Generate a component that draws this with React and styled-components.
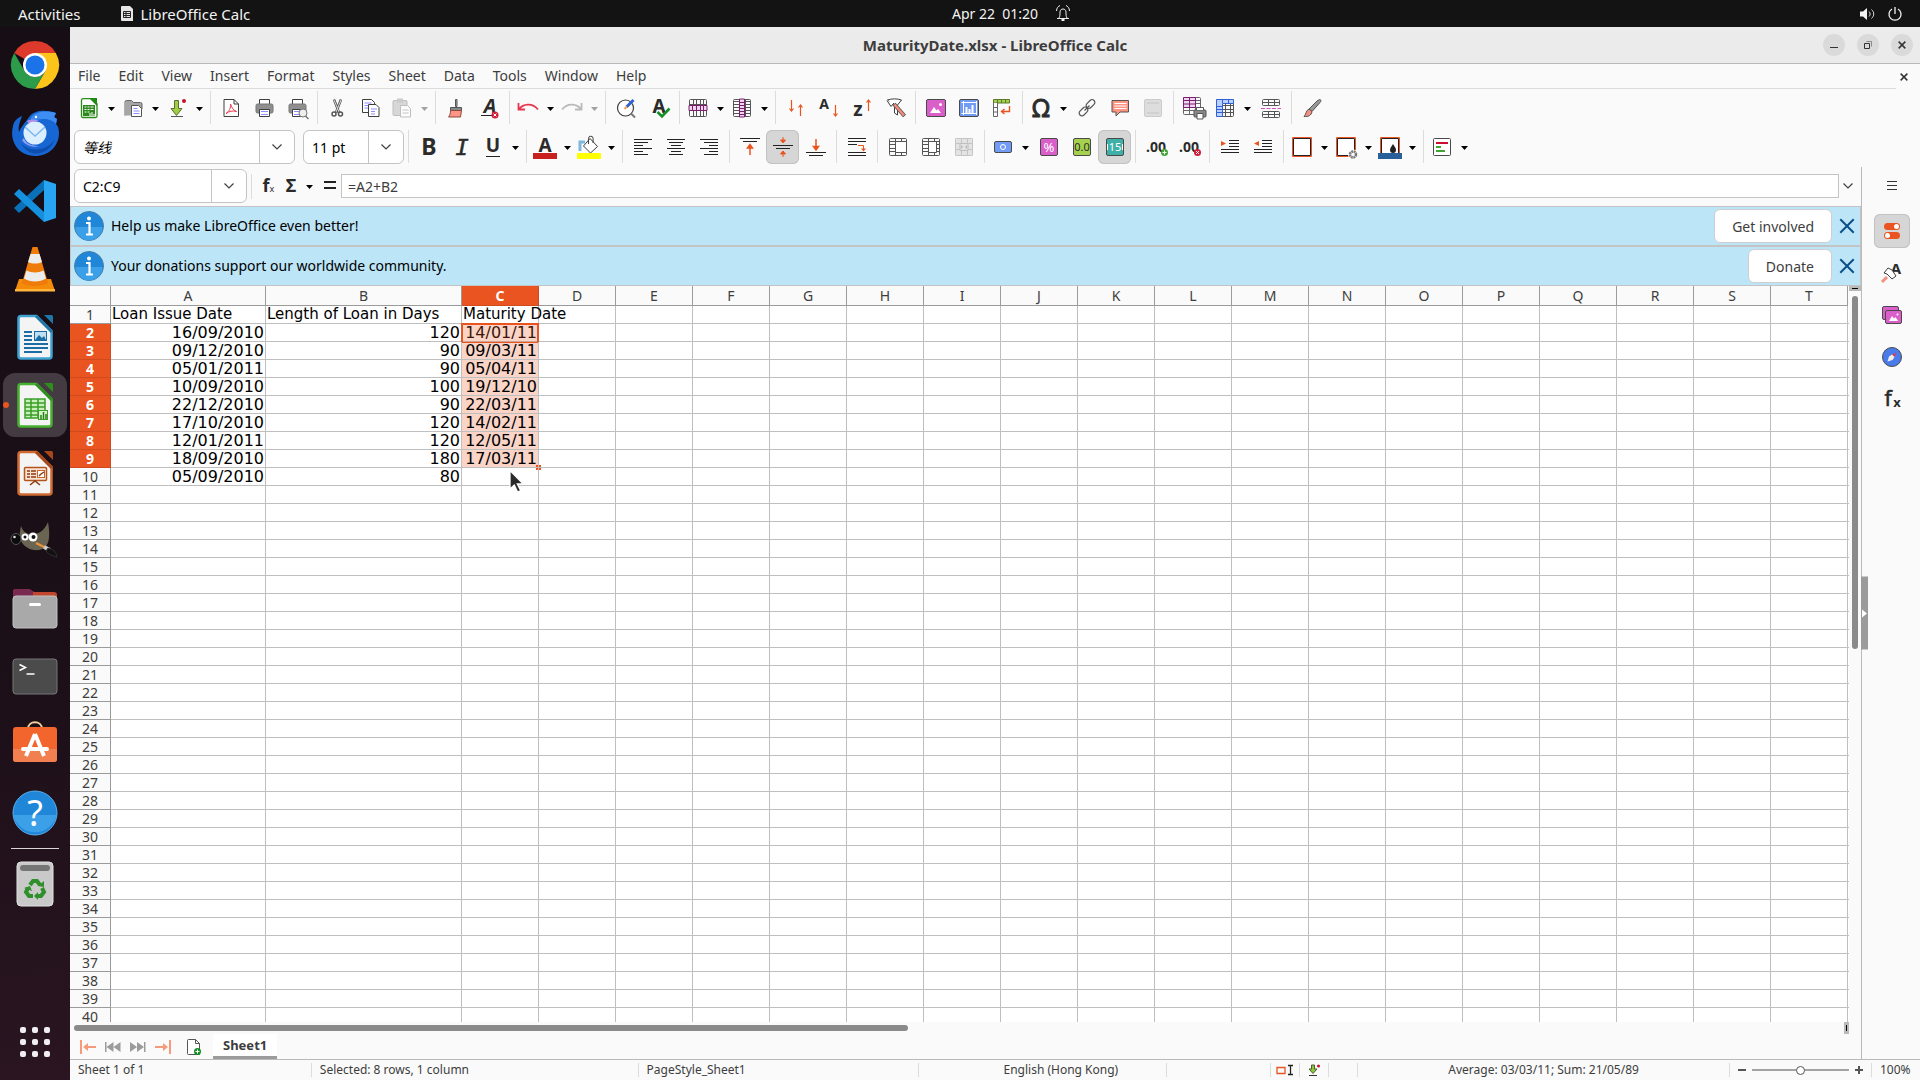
import styled, { createGlobalStyle, css } from "styled-components";

const Global = createGlobalStyle`
    * {
        box-sizing: border-box;
    }
    body {
        margin: 0;
        overflow: hidden;
        font-family: "Noto Sans", "Noto Sans CJK SC", sans-serif;
        font-size: 14px;
        color: #3d3d3d;
    }
    button, input {
        font: inherit;
        color: inherit;
        padding: 0;
        margin: 0;
        border: 0;
        background: none;
    }
    svg {
        display: block;
        flex: none;
        overflow: visible;
    }
`;

const Desktop = styled.div`
    height: 100vh;
    display: flex;
    flex-direction: column;
`;

const TopBar = styled.header`
    height: 27px;
    flex: none;
    display: grid;
    grid-template-columns: 1fr auto 1fr;
    align-items: center;
    background: #131313;
    color: #f2f2f2;
    line-height: 22px;
    padding: 0 18px;
`;

const TopGroup = styled.div`
    display: flex;
    align-items: center;
    gap: ${(p) => p.$gap}px;
    justify-content: ${(p) => (p.$end ? "flex-end" : "flex-start")};
    margin-left: ${(p) => p.$left || 0}px;
    font-size: ${(p) => (p.$large ? 15 : 14)}px;
    white-space: pre;
`;

const AppName = styled.span`
    display: flex;
    align-items: center;
    gap: 7px;
`;

const Below = styled.div`
    flex: 1;
    min-height: 0;
    display: flex;
`;

const Dock = styled.nav`
    width: 70px;
    flex: none;
    padding: 4px 0;
    display: flex;
    flex-direction: column;
    align-items: center;
    background: linear-gradient(175deg, #170d14 0%, #1b0f18 60%, #2a1521 100%);
`;

const DockButton = styled.button`
    position: relative;
    width: 64px;
    height: 64px;
    margin: 2px 0;
    flex: none;
    display: flex;
    align-items: center;
    justify-content: center;
    border-radius: 12px;
    background: ${(p) => (p.$active ? "#443a41" : "transparent")};
    &::before {
        content: "";
        display: ${(p) => (p.$active ? "block" : "none")};
        position: absolute;
        left: 0;
        width: 6px;
        height: 6px;
        border-radius: 50%;
        background: #e95420;
    }
`;

const DockLine = styled.div`
    width: 48px;
    height: 1px;
    margin: 1px 0;
    flex: none;
    background: #d8d4d6;
`;

const DockFill = styled.div`
    flex: 1;
`;

const Win = styled.main`
    flex: 1;
    min-width: 0;
    display: flex;
    flex-direction: column;
    background: #fafafa;
`;

const TitleBar = styled.div`
    height: 37px;
    flex: none;
    display: grid;
    grid-template-columns: 1fr auto 1fr;
    align-items: center;
    padding-right: 7px;
    background: #ebebeb;
    border-bottom: 1px solid #b9b9b9;
`;

const Title = styled.h1`
    grid-column: 2;
    margin: 0;
    padding-left: 7px;
    font-size: 15px;
    line-height: 20px;
    font-weight: 700;
`;

const WinButtons = styled.div`
    display: flex;
    justify-content: flex-end;
    gap: 12px;
`;

const RoundButton = styled.button`
    width: 22px;
    height: 22px;
    border-radius: 50%;
    background: #dadada;
    display: flex;
    align-items: center;
    justify-content: center;
`;

const MenuBar = styled.div`
    height: 25px;
    flex: none;
    display: flex;
    justify-content: space-between;
    padding-right: 8px;
`;

const MenuList = styled.div`
    flex: 1;
    display: flex;
    gap: 2px;
    border-bottom: 1px solid #dcdcdc;
`;

const MenuButton = styled.button`
    padding: 0 8px;
    line-height: 24px;
`;

const MenuClose = styled.button`
    width: 16px;
    display: flex;
    align-items: center;
    justify-content: center;
`;

const Toolbar = styled.div`
    height: 39px;
    flex: none;
    display: flex;
    align-items: flex-start;
    padding: 2px 0 0 4px;
`;

const ToolButton = styled.button`
    width: ${(p) => (p.$split ? 44 : 33)}px;
    height: 34px;
    padding-left: ${(p) => (p.$split ? 3 : 5)}px;
    flex: none;
    display: flex;
    align-items: center;
    border-radius: 6px;
    opacity: ${(p) => (p.disabled ? 0.35 : 1)};
    ${(p) =>
        p.$on &&
        css`
            background: #d6d6d6;
            box-shadow: inset 0 0 0 1px #c2c2c2;
        `}
`;

const Separator = styled.div`
    width: 1px;
    height: ${(p) => p.$height || 33}px;
    margin: 0 3px 0 4px;
    flex: none;
    align-self: ${(p) => (p.$middle ? "center" : "auto")};
    background: #dcdcdc;
`;

const Combo = styled.div`
    height: 34px;
    width: ${(p) => p.$width}px;
    margin-right: ${(p) => p.$after}px;
    flex: none;
    display: flex;
    background: #fff;
    border: 1px solid #c4c4c4;
    border-radius: 6px;
    color: #000;
`;

const ComboInput = styled.input`
    flex: 1;
    min-width: 0;
    padding-left: 8px;
    font-style: ${(p) => (p.$italic ? "italic" : "normal")};
    outline: none;
`;

const ComboButton = styled.button`
    width: 35px;
    display: flex;
    align-items: center;
    justify-content: center;
    border-left: 1px solid #c4c4c4;
`;

const Content = styled.div`
    flex: 1;
    min-height: 0;
    display: flex;
`;

const Sheet = styled.section`
    flex: 1;
    min-width: 0;
    display: flex;
    flex-direction: column;
`;

const FormulaBar = styled.div`
    height: 39px;
    flex: none;
    display: flex;
    align-items: center;
    padding: 0 4px 1px 4px;
`;

const FormulaButton = styled.button`
    width: ${(p) => p.$width}px;
    height: 24px;
    flex: none;
    display: flex;
    align-items: center;
    justify-content: center;
`;

const FormulaInput = styled.input`
    flex: 1;
    height: 24px;
    padding-left: 6px;
    background: #fff;
    border: 1px solid #c4c4c4;
    outline: none;
`;

const InfoBar = styled.div`
    height: 40px;
    flex: none;
    display: flex;
    align-items: center;
    padding: 0 5px 0 3px;
    background: #bce5f7;
    border: 1px solid #c4c4c4;
    color: #000;
`;

const InfoText = styled.span`
    flex: 1;
    padding-left: 7px;
    line-height: 20px;
`;

const InfoButton = styled.button`
    height: 34px;
    padding: 0 17px;
    margin-right: 7px;
    background: #fff;
    border: 1px solid #cfcfcf;
    border-radius: 6px;
    color: #3d3d3d;
`;

const GridRow = styled.div`
    flex: 1;
    min-height: 0;
    display: flex;
`;

const GridPane = styled.div`
    flex: 1;
    min-width: 0;
    overflow: hidden;
    background: #fff;
`;

const Table = styled.table`
    width: 100%;
    table-layout: fixed;
    border-collapse: separate;
    border-spacing: 0;
    th, td {
        height: 18px;
        padding: 0;
        line-height: 17px;
        white-space: nowrap;
    }
    thead th {
        height: 20px;
        line-height: 19px;
    }
`;

const Head = styled.th`
    font-weight: ${(p) => (p.$on ? 700 : 400)};
    color: ${(p) => (p.$on ? "#fff" : "#3d3d3d")};
    background: ${(p) => (p.$on ? "#e95420" : "#fafafa")};
    border-right: 1px solid ${(p) => (p.$on ? "#cf4a1c" : "#9b9b9b")};
    border-bottom: 1px solid ${(p) => (p.$on ? "#cf4a1c" : "#9b9b9b")};
`;

const HeadEnd = styled.td`
    background: #fafafa;
`;

const Cell = styled.td`
    position: relative;
    font-family: "DejaVu Sans", sans-serif;
    font-size: ${(p) => (p.$number ? 16 : 15)}px;
    color: #000;
    text-align: ${(p) => (p.$number ? "right" : "left")};
    border-right: 1px solid #bfbfbf;
    border-bottom: 1px solid #bfbfbf;
    &:last-child {
        border-right: 0;
    }
`;

const CellText = styled.span`
    padding: 0 1px;
`;

// covers the whole range, hung on its first cell
const Selection = styled.div`
    position: absolute;
    top: -1px;
    left: -1px;
    right: -1px;
    height: ${(p) => p.$rows * 18 + 1}px;
    background: rgba(233, 84, 32, 0.25);
    border: 1px solid #e95420;
    &::before {
        content: "";
        position: absolute;
        top: 0;
        left: 0;
        right: 0;
        height: 17px;
        border: 1px solid #e95420;
    }
    &::after {
        content: "";
        position: absolute;
        right: -3px;
        bottom: -3px;
        width: 5px;
        height: 5px;
        background: #e95420;
    }
`;

const Pointer = styled.svg`
    position: absolute;
    top: 1px;
    left: 46px;
    z-index: 2;
`;

const VScroll = styled.div`
    width: 12px;
    flex: none;
    display: flex;
    flex-direction: column;
    align-items: center;
    background: #fafafa;
`;

const VSplit = styled.div`
    width: 12px;
    height: 5px;
    margin-bottom: 5px;
    background: #b9b9b9;
    display: flex;
    align-items: center;
    justify-content: center;
    &::before {
        content: "";
        width: 6px;
        height: 1px;
        background: #000;
    }
`;

const VThumb = styled.div`
    width: 6px;
    height: 48%;
    border-radius: 3px;
    background: #8a8a8a;
`;

const HScroll = styled.div`
    height: 12px;
    flex: none;
    display: flex;
    align-items: center;
    justify-content: space-between;
    padding: 0 12px 0 4px;
`;

const HThumb = styled.div`
    width: 47%;
    height: 6px;
    border-radius: 3px;
    background: #8a8a8a;
`;

const HSplit = styled.div`
    width: 5px;
    height: 12px;
    background: #b9b9b9;
    display: flex;
    align-items: center;
    justify-content: center;
    &::before {
        content: "";
        width: 1px;
        height: 6px;
        background: #000;
    }
`;

const Tabs = styled.div`
    height: 25px;
    flex: none;
    display: flex;
    align-items: center;
    padding-left: 5px;
`;

const TabNav = styled.button`
    width: 25px;
    height: 24px;
    padding-left: 5px;
    display: flex;
    align-items: center;
`;

const TabAdd = styled.button`
    width: 38px;
    height: 24px;
    display: flex;
    align-items: center;
    justify-content: center;
`;

const Tab = styled.button`
    height: 25px;
    padding: 0 10px;
    background: #fff;
    border-bottom: 3px solid #9b9b9b;
    font-weight: 700;
    font-size: 13px;
`;

const Sidebar = styled.aside`
    position: relative;
    width: 59px;
    flex: none;
    display: flex;
    flex-direction: column;
    align-items: center;
    gap: 8px;
    padding: 2px 0 0 2px;
    border-left: 1px solid #b9b9b9;
`;

const SideButton = styled.button`
    width: 36px;
    height: 34px;
    flex: none;
    display: flex;
    align-items: center;
    justify-content: center;
    border-radius: 6px;
    &:first-of-type {
        margin-bottom: 3px;
    }
    ${(p) =>
        p.$on &&
        css`
            background: #d6d6d6;
            box-shadow: inset 0 0 0 1px #c2c2c2;
        `}
`;

const SideHandle = styled.div`
    position: absolute;
    left: -1px;
    top: 50%;
    width: 7px;
    height: 73px;
    transform: translateY(-50%);
    display: flex;
    align-items: center;
    background: #9b9b9b;
`;

const StatusBar = styled.footer`
    height: 21px;
    flex: none;
    display: grid;
    grid-template-columns: 242fr 327fr 281fr 248fr 104px 29px 29px 29px 372fr 142px 48px;
    align-items: center;
    border-top: 1px solid #b9b9b9;
    font-size: 12px;
    line-height: 18px;
    white-space: nowrap;
`;

const StatusItem = styled.div`
    height: 14px;
    padding: 0 8px;
    padding-left: ${(p) => (p.$wide ? 44 : 8)}px;
    display: flex;
    align-items: center;
    justify-content: ${(p) => (p.$center ? "center" : "flex-start")};
    border-right: 1px solid #dcdcdc;
    &:last-child {
        border-right: 0;
    }
`;

const Zoom = styled.div`
    height: 14px;
    display: flex;
    align-items: center;
    justify-content: center;
    gap: 6px;
    border-right: 1px solid #dcdcdc;
`;

const ZoomSlider = styled.input`
    appearance: none;
    width: 97px;
    height: 2px;
    background: #a3a3a3;
    &::-webkit-slider-thumb {
        appearance: none;
        width: 9px;
        height: 9px;
        border-radius: 50%;
        background: #fff;
        border: 1px solid #555;
    }
`;

const K = "#3f3f3f";
const O = "#e95420";
const sans = "Noto Sans, sans-serif";

const lines = (list, color = "#222", width = 1) =>
    list.map(([x, y, w], i) => <rect key={i} x={x} y={y} width={w} height={width} fill={color} />);

const grid = (x, y, w, h, cols, rows, color) => (
    <g fill="none" stroke={color}>
        <rect x={x + 0.5} y={y + 0.5} width={w - 1} height={h - 1} rx="1" />
        {Array.from({ length: cols - 1 }, (_, i) => (
            <path key={"c" + i} d={`M${Math.round(x + ((i + 1) * w) / cols) + 0.5} ${y}v${h}`} />
        ))}
        {Array.from({ length: rows - 1 }, (_, i) => (
            <path key={"r" + i} d={`M${x} ${Math.round(y + ((i + 1) * h) / rows) - 0.5}h${w}`} />
        ))}
    </g>
);

const printer = (
    <>
        <path d="M7.500 8V3.500h10V8" fill="#fff" stroke={K} />
        <rect x="4" y="8" width="17" height="9" rx="1.500" fill="#8f8f8f" stroke="#777" />
        <path d="M7.500 13.500h10v7h-10z" fill="#fff" stroke={K} />
        <path d="M9 15.500h7M9 18.500h7" stroke="#8d8dff" />
    </>
);

const badge = (x, y, color, mark) => (
    <>
        <circle cx={x} cy={y} r="3.500" fill={color} />
        <path d={mark === "+" ? `M${x - 2} ${y}h4M${x} ${y - 2}v4` : `M${x - 1.4} ${y - 1.4}l2.8 2.8m0-2.8l-2.8 2.8`} stroke="#fff" />
    </>
);

const glyph = (char, x, y, size, extra = {}) => (
    <text x={x} y={y} fontSize={size} fontFamily={sans} fontWeight="700" fill="#2b2b2b" textAnchor="middle" {...extra}>
        {char}
    </text>
);

const icons = {
    new: (
        <>
            <path d="M6 2.700h9l5 5V20a1.500 1.500 0 0 1-1.500 1.500H6A1.500 1.500 0 0 1 4.500 20V4.200A1.500 1.500 0 0 1 6 2.700z" fill="#fff" stroke="#2a8a1b" strokeWidth="1.300" />
            <path d="M12 2h8v8z" fill="#1f8a12" />
            <path d="M6 9h12v11H6z" fill="#2a8a1b" />
            <path d="M7.500 11h2m1 0h2m1 0h3M7.500 13.500h2m1 0h2m1 0h3M7.500 16h2m1 0h2" stroke="#fff" />
            <path d="M13 20v-3m2 3v-4m2 4v-2" stroke="#fff" />
        </>
    ),
    open: (
        <>
            <path d="M4 19.500V6a1.500 1.500 0 0 1 1.500-1.500h5l2 2h7A1.500 1.500 0 0 1 21 8v5" fill="#a6a6a6" stroke="#666" />
            <path d="M4 19.500h7V6H4z" fill="#a6a6a6" />
            <path d="M10.500 9.500h7l3 3v8h-10z" fill="#fff" stroke="#555" />
            <path d="M12.500 12.500h4m-4 2.500h6m-6 2.500h6" stroke="#8d8dff" />
        </>
    ),
    save: (
        <>
            <path d="M9.500 4.500h4v8h3.500l-5.500 7-5.500-7h3.500z" fill="#9fce42" stroke="#5b6f35" />
            <path d="M6 20.500h12" stroke="#555" />
            <circle cx="19" cy="5" r="2" fill="#c8102e" />
        </>
    ),
    pdf: (
        <>
            <path d="M5 3.500h10l4.500 4.500v12.500H5z" fill="#fff" stroke={K} strokeLinejoin="round" />
            <path d="M15 3.500V8h4.500" fill="none" stroke={K} />
            <path d="M11.500 8c1.500 4 2.500 6 6 7.500-4-1-7-.5-10.500 2 3-2 5-5.500 4.500-9.500z" fill="none" stroke="#e8364f" />
        </>
    ),
    print: printer,
    preview: (
        <>
            {printer}
            <circle cx="18" cy="17" r="4" fill="#eee" stroke="#777" />
            <path d="M20.500 20l3 3" stroke="#777" strokeWidth="1.500" />
        </>
    ),
    cut: (
        <>
            <path d="M8 3.500l5 13M15 3.500l-5 13" stroke="#555" strokeWidth="2.500" />
            <path d="M8 4l5 12M15 4l-5 12" stroke="#ddd" />
            <circle cx="8" cy="18" r="2" fill="#fff" stroke="#555" strokeWidth="1.500" />
            <circle cx="14.500" cy="18" r="2" fill="#fff" stroke="#555" strokeWidth="1.500" />
        </>
    ),
    copy: (
        <>
            <path d="M3.500 3.500h9l3 3v10h-12z" fill="#fff" stroke={K} />
            <path d="M5.500 7h7m-7 2.500h4m-4 2.500h4" stroke="#8d8dff" />
            <path d="M9.500 8.500h7.500l3 3v9H9.500z" fill="#fff" stroke={K} />
            <path d="M12 13h6m-6 2.500h4m-4 2.500h4" stroke="#8d8dff" />
        </>
    ),
    paste: (
        <>
            <rect x="3" y="4.500" width="14" height="15" rx="1" fill="#999" stroke="#555" />
            <rect x="7" y="2.500" width="6" height="4" fill="#777" />
            <path d="M10.500 9.500h7l3 3v8.500h-10z" fill="#fff" stroke="#555" />
            <path d="M12.500 14h6m-6 3h6" stroke="#666" />
        </>
    ),
    clone: (
        <>
            <path d="M11.500 3.500h1.500v7h-1.500z" fill="#aaa" stroke="#555" />
            <path d="M6.500 11.500h11v3h-11z" fill="#888" stroke="#555" />
            <path d="M6.500 14.500h11l-1 6.500H4.500c1.500-1.500 2-4 2-6.500z" fill="#ff9384" stroke="#8a4b40" />
        </>
    ),
    clear: (
        <>
            {glyph("A", 13, 17, 20, { fontStyle: "italic" })}
            <path d="M4 19.500h11" stroke="#222" />
            {badge(18, 19, "#cf1f3a", "x")}
        </>
    ),
    undo: <path d="M2.500 7v6.500H9M3 13c4-5 13-7 19 .5" fill="none" stroke="#e8364f" strokeWidth="1.800" />,
    redo: <path d="M21.500 7v6.500H15M21 13c-4-5-13-7-19 .5" fill="none" stroke="#444" strokeWidth="1.800" />,
    find: (
        <>
            <circle cx="11.500" cy="12" r="8" fill="#fff" stroke={K} strokeWidth="1.200" />
            <path d="M17 17.500l4 4" stroke="#777" strokeWidth="2" />
            <path d="M12.500 11l7-7" stroke="#2f62d6" strokeWidth="3" />
            <path d="M10.500 13l2.500-2.500" stroke="#f0a05c" strokeWidth="2" />
        </>
    ),
    spell: (
        <>
            {glyph("A", 12, 17, 19)}
            <path d="M10.500 16l4.500 4.500L22.500 12.500" fill="none" stroke="#159026" strokeWidth="2.600" />
        </>
    ),
    rows: (
        <>
            {grid(3, 3, 18, 18, 5, 3, "#555")}
            <path d="M3 9.500h18v5H3z" fill="#f0d3ee" stroke="#7a1f6d" />
            <path d="M6.500 9v6m4-6v6m4-6v6m3-6v6" stroke="#7a1f6d" />
        </>
    ),
    cols: (
        <>
            {grid(3, 3, 18, 18, 3, 6, "#555")}
            <path d="M9.500 3v18h5V3z" fill="#f0d3ee" stroke="#7a1f6d" />
            <path d="M9.500 6.500h5m-5 3h5m-5 3h5m-5 3h5m-5 3h5" stroke="#7a1f6d" />
        </>
    ),
    sort: <path d="M7.500 4v11M5.500 12.500l2 2.500 2-2.500M16.500 20V9M14.500 11.500l2-2.500 2 2.500" fill="none" stroke={O} strokeWidth="1.200" />,
    asc: (
        <>
            {glyph("A", 7, 13, 14)}
            <path d="M18.500 9v11M16.500 17.500l2 2.500 2-2.500" fill="none" stroke={O} strokeWidth="1.200" />
        </>
    ),
    desc: (
        <>
            {glyph("z", 8, 20, 19)}
            <path d="M18.500 15V4M16.500 6.500l2-2.500 2 2.500" fill="none" stroke={O} strokeWidth="1.200" />
        </>
    ),
    filter: (
        <>
            <path d="M4.500 4c4-1.500 10-1.500 14 0L14.500 9v10l-3-2V10z" fill="#fff" stroke={K} />
            <path d="M4 4.500l4 6 3-3.500" fill="#fff" stroke={K} />
            <path d="M11 8l10.500 12" stroke="#555" strokeWidth="4" />
            <path d="M11.500 8.500L21 19.500" stroke="#f28b7d" strokeWidth="2.600" />
        </>
    ),
    image: (
        <>
            <rect x="2.500" y="3.500" width="19" height="17" rx="1.500" fill="#db5fcb" stroke="#4a4a4a" />
            <path d="M6 17l4-6 2.500 3.500L14 13l3 4z" fill="#fff" />
            <circle cx="16.500" cy="8.500" r="1.500" fill="#fff" />
        </>
    ),
    chart: (
        <>
            <rect x="2.500" y="3.500" width="19" height="17" rx="1.500" fill="#729bf5" stroke="#4a4a4a" />
            <path d="M6.500 5v14M4.500 17.500h15M4.500 6.500h15M19.500 5v14" stroke="#fff" />
            <path d="M9.500 17v-6m3 6v-4m3 4v-8" stroke="#fff" strokeWidth="2" />
        </>
    ),
    pivot: (
        <>
            <path d="M3.500 3.500h16v3.500h-16z" fill="#a6d14f" stroke="#5d7a2c" />
            <path d="M7.500 3.500v3.500m4-3.500v3.500m4-3.500v3.500" stroke="#5d7a2c" />
            <path d="M3.500 7v13.500h4V7M3.500 11.500h4m-4 4.500h4" fill="#fff" stroke="#666" />
            <path d="M19.500 10v5.500H12M14.500 13l-3 2.500 3 2.500" fill="none" stroke={O} strokeWidth="1.400" />
        </>
    ),
    omega: glyph("Ω", 12, 21, 24, { fontFamily: "DejaVu Sans, sans-serif", fontWeight: 400, stroke: "#2b2b2b", strokeWidth: 0.8 }),
    link: (
        <g fill="none" stroke="#555" strokeWidth="1.200">
            <rect x="-5" y="-2.800" width="10" height="5.600" rx="2.800" transform="translate(15.500 8) rotate(-45)" />
            <rect x="-5" y="-2.800" width="10" height="5.600" rx="2.800" transform="translate(8.500 15.500) rotate(-45)" />
            <path d="M9.500 14.500l5-5" />
        </g>
    ),
    comment: (
        <>
            <path d="M4 4.500h16.500V16H12l-4 4v-4H4z" fill="#ff9384" stroke="#555" strokeLinejoin="round" />
            <path d="M6.500 7.500h12m-12 2.500h12m-12 2.500h12" stroke="#fff" />
        </>
    ),
    header: (
        <>
            <rect x="3.500" y="3.500" width="17" height="17" rx="1.500" fill="#aaa" stroke="#777" />
            <path d="M6 7h12M6 17h12" stroke="#666" />
        </>
    ),
    area: (
        <>
            {grid(1, 1, 18, 18, 3, 5, "#666")}
            <path d="M1.500 1.500h12v10h-12z" fill="#f0d3ee" stroke="#7a1f6d" />
            <path d="M7.500 1v10M1 4.500h12M1 8h12" stroke="#7a1f6d" />
            <rect x="12" y="14" width="12" height="7" rx="1" fill="#888" stroke="#555" />
            <path d="M14.500 14v-2.500h7V14M15 17.500h6V23h-6z" fill="#fff" stroke="#555" />
        </>
    ),
    freeze: (
        <>
            {grid(3, 3, 18, 18, 4, 5, "#555")}
            <path d="M3.500 3.500h17v4h-11v13h-6z" fill="#bcd0ff" stroke="#2f62d6" />
            <path d="M9.500 3v4m6-4v4M3 10.500h6m-6 3h6m-6 3h6" stroke="#2f62d6" />
        </>
    ),
    split: (
        <>
            {grid(3, 3, 18, 7, 3, 2, "#555")}
            {grid(3, 15, 18, 7, 3, 2, "#555")}
            <path d="M2 12.500h20" stroke="#d94fc4" strokeDasharray="4 1.500" />
        </>
    ),
    draw: (
        <>
            <path d="M19.500 3.500c2 0 1.500 2 .5 3l-8 9-3-2.500 8-8z" fill="#999" stroke="#555" />
            <path d="M9 13l3 2.500c-.5 4-4 5.500-8 5 2-1.500 2-6.500 5-7.500z" fill="#f4907f" stroke="#555" />
        </>
    ),
    bold: glyph("B", 12, 20, 23),
    italic: glyph("I", 12, 20, 22, { fontFamily: "DejaVu Sans Mono, monospace", fontStyle: "italic", fontWeight: 400, stroke: "#2b2b2b", strokeWidth: 0.6 }),
    underline: (
        <>
            {glyph("U", 12, 17, 19)}
            <path d="M5 21.500h14" stroke="#222" />
        </>
    ),
    color: (
        <>
            {glyph("A", 12, 17, 19)}
            <path d="M0 18h24v6H0z" fill="#c9211e" />
        </>
    ),
    fill: (
        <>
            <path d="M3 16V7h5" fill="none" stroke="#7fb8dd" strokeWidth="3" />
            <path d="M13 3.500l7.500 8-7 6.500-7-7z" fill="#fff" stroke={K} />
            <path d="M11.500 9V3.500a2.300 2.300 0 0 1 4.600 0V8" fill="none" stroke={K} />
            <path d="M0 18h24v6H0z" fill="#ffff00" />
        </>
    ),
    left: lines([[3, 4, 18], [3, 7, 14], [3, 10, 9], [3, 13, 18], [3, 16, 9], [3, 19, 14]]),
    center: lines([[3, 4, 18], [5, 7, 14], [7, 10, 10], [3, 13, 18], [7, 16, 10], [5, 19, 14]]),
    right: lines([[3, 4, 18], [7, 7, 14], [12, 10, 9], [3, 13, 18], [12, 16, 9], [7, 19, 14]]),
    top: (
        <>
            {lines([[2, 3, 20], [5, 6, 14]])}
            <path d="M12 20V10M9.500 13L12 9.500l2.500 3.500z" fill={O} stroke={O} strokeWidth="1.500" />
        </>
    ),
    middle: (
        <>
            {lines([[2, 10, 20], [5, 13, 14]])}
            <path d="M12 2v4M9.500 5h5L12 8zM12 22v-4M9.500 19h5L12 16z" fill={O} stroke={O} />
        </>
    ),
    bottom: (
        <>
            {lines([[2, 17, 20], [5, 20, 14]])}
            <path d="M12 4v9M9.500 11.500h5L12 15z" fill={O} stroke={O} strokeWidth="1.500" />
        </>
    ),
    wrap: (
        <>
            {lines([[3, 3, 18], [3, 6, 18], [3, 9, 9], [3, 17, 18], [3, 20, 18]])}
            <path d="M13 10.500h5.500V14" fill="none" stroke={O} />
            <path d="M16 13.500h5l-2.500 3z" fill={O} />
        </>
    ),
    merge: (
        <>
            {grid(3, 3, 18, 18, 3, 5, "#555")}
            <path d="M9.500 6.500h11v11h-11z" fill="#fff" stroke="#555" />
        </>
    ),
    mergeCells: (
        <>
            {grid(3, 3, 18, 18, 3, 5, "#555")}
            <path d="M9.500 6.500h8v11h-8z" fill="#fff" stroke="#555" />
        </>
    ),
    unmerge: (
        <>
            <rect x="3" y="3" width="18" height="18" fill="#bbb" />
            {grid(3, 3, 18, 18, 3, 3, "#666")}
            <path d="M8 8.500h8v7H8z" fill="#bbb" stroke="#555" />
            <path d="M9 10l2 2-2 2zM15 10l-2 2 2 2z" fill="#444" />
        </>
    ),
    currency: (
        <>
            <rect x="3.500" y="6.500" width="17" height="11" rx="1.500" fill="#729bf5" stroke="#4a4a4a" />
            <circle cx="12" cy="12" r="2.500" fill="none" stroke="#fff" />
        </>
    ),
    percent: (
        <>
            <rect x="3.500" y="3.500" width="17" height="17" rx="1.500" fill="#db5fcb" stroke="#4a4a4a" />
            {glyph("%", 12, 17, 13, { fill: "#fff", fontWeight: 400 })}
        </>
    ),
    number: (
        <>
            <rect x="3.500" y="3.500" width="17" height="17" rx="1.500" fill="#a6d14f" stroke="#4a4a4a" />
            {glyph("0.0", 12, 16, 11, { fontWeight: 400 })}
        </>
    ),
    date: (
        <>
            <rect x="3.500" y="3.500" width="17" height="17" rx="1.500" fill="#3fb0a8" stroke="#4a4a4a" />
            {glyph("15", 12, 16, 11, { fill: "#fff", fontWeight: 400 })}
            <path d="M4.500 9v6m15-6v6" stroke="#fff" />
        </>
    ),
    addDec: (
        <>
            {glyph(".00", 12, 17, 14)}
            {badge(20.5, 17.5, "#3fa535", "+")}
        </>
    ),
    delDec: (
        <>
            {glyph(".00", 12, 17, 14)}
            {badge(20.5, 17.5, "#cf1f3a", "x")}
        </>
    ),
    indent: (
        <>
            {lines([[11, 5, 10], [11, 8, 10], [11, 11, 10], [3, 14, 18], [3, 17, 18]])}
            <path d="M3 6v5l5-2.500z" fill={O} />
        </>
    ),
    outdent: (
        <>
            {lines([[11, 5, 10], [11, 8, 10], [11, 11, 10], [3, 14, 18], [3, 17, 18]])}
            <path d="M8 6v5L3 8.500z" fill={O} />
        </>
    ),
    border: (
        <>
            <path d="M2.500 2.500h19v19h-19z" fill="#fff" stroke={O} />
            <path d="M3.500 3.500h17v17h-17z" fill="none" stroke="#222" />
        </>
    ),
    borderStyle: (
        <>
            <path d="M2.500 2.500h19v19h-19z" fill="#fff" stroke={O} />
            <path d="M3.500 3.500h17v17h-17z" fill="none" stroke="#222" />
            <circle cx="19" cy="19.500" r="5" fill="#fafafa" />
            <circle cx="19" cy="19.500" r="3" fill="none" stroke="#777" strokeWidth="2.500" strokeDasharray="1.800 .6" />
        </>
    ),
    borderColor: (
        <>
            <path d="M2.500 2.500h19v19h-19z" fill="#fff" stroke={O} />
            <path d="M3.500 3.500h17v17h-17z" fill="none" stroke="#222" />
            <path d="M15 9c2 3 3 4 3 6a3 3 0 0 1-6 0c0-2 1-3 3-6z" fill="#222" />
            <path d="M0 18h24v6H0z" fill="#2a6099" />
        </>
    ),
    conditional: (
        <>
            <rect x="3.500" y="3.500" width="17" height="17" rx="1" fill="#fff" stroke="#4a4a4a" />
            <path d="M6 8h12" stroke="#c8102e" strokeWidth="2" />
            <path d="M6 12h5M6 16h9" stroke="#3fa535" strokeWidth="2" />
        </>
    ),
};

const standard = [
    ["new", "New", "split"], ["open", "Open", "split"], ["save", "Save", "split"], null,
    ["pdf", "Export as PDF"], ["print", "Print"], ["preview", "Print Preview"], null,
    ["cut", "Cut"], ["copy", "Copy"], ["paste", "Paste", "split", "off"], null,
    ["clone", "Clone Formatting"], ["clear", "Clear Formatting"], null,
    ["undo", "Undo", "split"], ["redo", "Redo", "split", "off"], null,
    ["find", "Find and Replace"], ["spell", "Spelling"], null,
    ["rows", "Row", "split"], ["cols", "Column", "split"], null,
    ["sort", "Sort"], ["asc", "Sort Ascending"], ["desc", "Sort Descending"], ["filter", "AutoFilter"], null,
    ["image", "Insert Image"], ["chart", "Insert Chart"], ["pivot", "Pivot Table"], null,
    ["omega", "Special Character", "split"], ["link", "Hyperlink"], ["comment", "Comment"], ["header", "Headers and Footers", "", "off"], null,
    ["area", "Define Print Area"], ["freeze", "Freeze", "split"], ["split", "Split Window"], null,
    ["draw", "Show Draw Functions"],
];

const formatting = [
    null, ["bold", "Bold"], ["italic", "Italic"], ["underline", "Underline", "split"], null,
    ["color", "Font Color", "split"], ["fill", "Background Color", "split"], null,
    ["left", "Align Left"], ["center", "Center"], ["right", "Align Right"], null,
    ["top", "Align Top"], ["middle", "Center Vertically", "", "on"], ["bottom", "Align Bottom"], null,
    ["wrap", "Wrap Text"], null,
    ["merge", "Merge and Center"], ["mergeCells", "Merge Cells"], ["unmerge", "Unmerge Cells", "", "off"], null,
    ["currency", "Currency", "split"], ["percent", "Percent"], ["number", "Number"], ["date", "Date", "", "on"], null,
    ["addDec", "Add Decimal Place"], ["delDec", "Delete Decimal Place"], null,
    ["indent", "Increase Indent"], ["outdent", "Decrease Indent"], null,
    ["border", "Borders", "split"], ["borderStyle", "Border Style", "split"], ["borderColor", "Border Color", "split"], null,
    ["conditional", "Conditional", "split"],
];

const Tools = ({ items }) =>
    items.map((item, i) => {
        if (!item) return <Separator key={i} />;
        const [name, label, split, state] = item;
        return (
            <ToolButton key={i} aria-label={label} $split={!!split} $on={state === "on"} disabled={state === "off"}>
                <svg width="24" height="24">{icons[name]}</svg>
                {split && (
                    <svg width="17" height="24">
                        <path d="M7 11h7l-3.500 4z" fill="#000" />
                    </svg>
                )}
            </ToolButton>
        );
    });

const Chevron = () => (
    <svg width="12" height="8">
        <path d="M1.500 1.500L6 6l4.500-4.500" fill="none" stroke={K} strokeWidth="1.200" />
    </svg>
);

const Cross = ({ size, color = "#333", weight = 1.5 }) => (
    <svg width={size} height={size} viewBox="0 0 10 10">
        <path d="M.8.8l8.400 8.400m0-8.400L.8 9.200" stroke={color} strokeWidth={(weight * 10) / size} />
    </svg>
);

const officeDoc = (dark, light, inner) => (
    <>
        <path d="M10 3h15.500L40.500 18v25a2.500 2.500 0 0 1-2.500 2.500H10A2.500 2.500 0 0 1 7.500 43V5.500A2.500 2.500 0 0 1 10 3z" fill="#f4f4f4" stroke={light} strokeWidth="2.500" />
        <path d="M25 3l16 16" stroke={dark} strokeWidth="3" />
        <path d="M33 2h7.500a1.500 1.500 0 0 1 1.500 1.500V11z" fill={dark} />
        {inner}
    </>
);

const dockIcons = {
    Chrome: (
        <>
            <path d="M24 24L3.200 12A24 24 0 0 1 44.800 12H24L13.600 30z" fill="#dd3a2c" />
            <path d="M44.800 12A24 24 0 0 1 24 48L34.400 30 24 12z" fill="#fcc41b" />
            <path d="M3.200 12L13.600 30a12 12 0 0 0 20.800 0L24 48A24 24 0 0 1 3.200 12z" fill="#2c9c4b" />
            <circle cx="24" cy="24" r="12" fill="#fff" />
            <circle cx="24" cy="24" r="9.500" fill="#1a73e8" />
        </>
    ),
    Thunderbird: (
        <>
            <path d="M2 17c-4 16 6 30 22 30 14 0 24-10 24-23 0-4-1-7-3-9l1-5-3-2 2-4C36 1 24 0 18 8l-2 3c-3 4-6 7-8 12-1-6 1-10 3-16C6 9 3 12 2 17z" fill="#1667d4" />
            <path d="M20 9c6-8 17-7 25-5l-2 4 3 2-1 5c-4-5-15-7-25-2z" fill="#3d8df2" />
            <path d="M16 12c3-2 8-2 12 0-4 0-8 1-10 3z" fill="#b48be8" />
            <circle cx="24" cy="24" r="11.500" fill="#dcefff" />
            <path d="M14 18l10 9 10-9" fill="none" stroke="#7db8ee" strokeWidth="1.500" />
            <path d="M13 29c2 6 8 8 15 8-4 2-14 0-17-6z" fill="#8f9cf5" />
            <path d="M10 34c9 10 26 8 34-4-5 16-26 21-34 4z" fill="#0e4fae" />
            <circle cx="25" cy="8" r="1.200" fill="#fff" />
        </>
    ),
    "Visual Studio Code": (
        <>
            <path d="M3 31l5 5 25-23V3z" fill="#0a70b8" />
            <path d="M3 17l5-5 25 23v10z" fill="#1490df" />
            <path d="M33 3l12 4v34l-12 4z" fill="#27a5f2" />
        </>
    ),
    VLC: (
        <>
            <path d="M8 34h32l4 12H4z" fill="#f58b0a" />
            <path d="M4 44h40v2.500H4z" fill="#ffb43b" />
            <path d="M21.500 2h5L37 38c-5 4-21 4-26 0z" fill="#ef7b0a" />
            <path d="M19.500 9h9l2.500 8c-4 2-10 2-14 0zM15.500 25.500c5 2.500 12 2.500 17 0l2.500 8c-6 4-16 4-22 0z" fill="#ececec" />
        </>
    ),
    "LibreOffice Writer": officeDoc("#1f76a8", "#3fa0d2", (
        <>
            <path d="M13 19h8m-8 4h8m-8 4h8m-8 4h24m-24 4h24M13 39h18" stroke="#1b6da5" strokeWidth="1.800" />
            <rect x="23.500" y="18.500" width="12" height="9" fill="#bfe0f2" stroke="#1b6da5" />
            <path d="M24 27l4-5 3 3 2-2 2 4z" fill="#1b6da5" />
        </>
    )),
    "LibreOffice Calc": officeDoc("#2f8f1d", "#46b02f", (
        <>
            <rect x="14" y="18" width="20" height="19" fill="#c9efbd" stroke="#3a9e27" strokeWidth="1.500" />
            <path d="M14 22h20m-20 4h20m-20 4h20m-20 4h20M20 18v19m7-19v19" stroke="#3a9e27" strokeWidth="1.500" />
            <rect x="27.500" y="29.500" width="9" height="9" fill="#d6f3cc" stroke="#3a9e27" />
            <path d="M30 38v-4m2.500 4v-7m2.500 7v-5" stroke="#2a7d19" strokeWidth="1.500" />
        </>
    )),
    "LibreOffice Impress": officeDoc("#a8471a", "#cf6a32", (
        <>
            <rect x="13.500" y="18.500" width="22" height="13" rx="1" fill="#fbe3d5" stroke="#b4541f" strokeWidth="1.500" />
            <path d="M16 22h3m1 0h5m-9 3h3m1 0h5m-9 3h3m1 0h5" stroke="#8a3b10" strokeWidth="1.500" />
            <rect x="26.500" y="21.500" width="7" height="7" fill="#fff" stroke="#c9632c" />
            <path d="M28 27l2-2 3-2M19 36l5-4 5 4" fill="none" stroke="#8a3b10" strokeWidth="1.500" />
        </>
    )),
    GIMP: (
        <g transform="translate(0 3)">
            <path d="M10 6c2 5 4 7 8 8 8 1 15-2 19-12 2 12 3 26-9 28-8 1-15-3-18-9-2-4-1-11 0-15z" fill="#6a6453" />
            <ellipse cx="5" cy="19" rx="5" ry="5.500" fill="#0c0c0c" stroke="#555" />
            <circle cx="3.500" cy="17" r="1.300" fill="#ddd" />
            <circle cx="14" cy="17" r="3.500" fill="#fff" />
            <circle cx="22" cy="17" r="4.500" fill="#fff" />
            <circle cx="14" cy="17" r="1.500" fill="#111" />
            <circle cx="22.500" cy="17" r="2" fill="#111" />
            <path d="M25 23l12 6" stroke="#e8923a" strokeWidth="2.500" />
            <path d="M33 27l6 3" stroke="#ccc" strokeWidth="4" />
            <path d="M37 28c5 1 8 4 9 9-4-1-8-2-11-6z" fill="#111" stroke="#333" />
        </g>
    ),
    Files: (
        <g transform="translate(0 1)">
            <path d="M2 12V6a3 3 0 0 1 3-3h13l5 3h20a3 3 0 0 1 3 3v6H2z" fill="#c2452d" />
            <path d="M2 12V6a3 3 0 0 1 3-3h13l5 3H22v6z" fill="#7a2a50" />
            <rect x="2" y="10" width="44" height="32" rx="3" fill="#a9a9a9" stroke="#c2c2c2" />
            <rect x="18" y="17" width="12" height="3" rx="1.500" fill="#fff" />
        </g>
    ),
    Terminal: (
        <>
            <rect x="2" y="6" width="44" height="35" rx="3" fill="#4b4b4b" stroke="#777" />
            <path d="M8.500 11.500l6 3-6 3" fill="none" stroke="#fff" strokeWidth="1.500" />
            <path d="M15.500 21h8" stroke="#fff" strokeWidth="1.500" />
        </>
    ),
    Software: (
        <>
            <path d="M17 8c0-9 14-9 14 0" fill="none" stroke="#f4cf9a" strokeWidth="2" />
            <rect x="2" y="6" width="44" height="35" rx="3" fill="#f2652d" />
            <path d="M2 28h44v10a3 3 0 0 1-3 3H5a3 3 0 0 1-3-3z" fill="#f27f50" />
            <path d="M24 13l-9 22m9-22l9 22" stroke="#fff" strokeWidth="4" />
            <path d="M12 28h24" stroke="#fff" strokeWidth="4" strokeLinecap="round" />
        </>
    ),
    Help: (
        <>
            <circle cx="24" cy="24" r="22" fill="#1f86d8" stroke="#5ab0ee" />
            <path d="M2.500 26h43a22 22 0 0 1-43 0z" fill="#3ba0e8" />
            <text x="24" y="37" fontSize="36" fontFamily={sans} fill="#fff" textAnchor="middle">?</text>
        </>
    ),
};

const trashIcon = (
    <>
        <rect x="6" y="2" width="36" height="44" rx="4" fill="#c9c9c9" stroke="#e2e2e2" />
        <rect x="9" y="5" width="30" height="6" rx="3" fill="#757575" />
        <g fill="none" stroke="#2f8f2a" strokeWidth="4">
            <path d="M19 25l3-4h4l3 4" />
            <path d="M31 28l2 4-3 4h-4" />
            <path d="M22 36h-4l-3-4 2-4" />
        </g>
        <path d="M27 26l6 1 0-6zM27 32v8l-4-4zM13 28l6-2 2 5z" fill="#2f8f2a" />
    </>
);

const menus = ["File", "Edit", "View", "Insert", "Format", "Styles", "Sheet", "Data", "Tools", "Window", "Help"];
const columns = "ABCDEFGHIJKLMNOPQRST".split("");
const widths = { A: 155, B: 196 };

const loans = [
    ["Loan Issue Date", "Length of Loan in Days", "Maturity Date"],
    ["16/09/2010", "120", "14/01/11"],
    ["09/12/2010", "90", "09/03/11"],
    ["05/01/2011", "90", "05/04/11"],
    ["10/09/2010", "100", "19/12/10"],
    ["22/12/2010", "90", "22/03/11"],
    ["17/10/2010", "120", "14/02/11"],
    ["12/01/2011", "120", "12/05/11"],
    ["18/09/2010", "180", "17/03/11"],
    ["05/09/2010", "80", ""],
];

const infos = [
    ["Help us make LibreOffice even better!", "Get involved"],
    ["Your donations support our worldwide community.", "Donate"],
];

const DockBar = () => (
    <Dock>
        {Object.keys(dockIcons).map((name) => (
            <DockButton key={name} aria-label={name} $active={name === "LibreOffice Calc"}>
                <svg width="48" height="48">{dockIcons[name]}</svg>
            </DockButton>
        ))}
        <DockLine />
        <DockButton aria-label="Trash">
            <svg width="48" height="48">{trashIcon}</svg>
        </DockButton>
        <DockFill />
        <DockButton aria-label="Show Applications">
            <svg width="30" height="30" fill="#f0eef0">
                {[0, 12, 24].map((y) => [0, 12, 24].map((x) => <rect key={x + "-" + y} x={x} y={y} width="6" height="6" rx="2" />))}
            </svg>
        </DockButton>
    </Dock>
);

const InfoIcon = () => (
    <svg width="30" height="30">
        <circle cx="15" cy="15" r="14.500" fill="#1f86d8" stroke="#4a7da5" />
        <path d="M1.500 16h27a13.500 13.500 0 0 1-27 0z" fill="#3ba0e8" />
        <circle cx="15" cy="7.500" r="2" fill="#fff" />
        <path d="M12 12h3.500v11M12 23.500h7" fill="none" stroke="#fff" strokeWidth="2.200" />
    </svg>
);

const Spreadsheet = () => (
    <Table>
        <colgroup>
            <col style={{ width: 41 }} />
            {columns.map((c) => (
                <col key={c} style={{ width: widths[c] || 77 }} />
            ))}
            <col />
        </colgroup>
        <thead>
            <tr>
                <Head />
                {columns.map((c) => (
                    <Head key={c} scope="col" $on={c === "C"}>{c}</Head>
                ))}
                <HeadEnd />
            </tr>
        </thead>
        <tbody>
            {Array.from({ length: 40 }, (_, r) => (
                <tr key={r}>
                    <Head scope="row" $on={r >= 1 && r <= 8}>{r + 1}</Head>
                    {columns.map((c, i) => (
                        <Cell key={c} $number={r > 0}>
                            {loans[r] && loans[r][i] && <CellText>{loans[r][i]}</CellText>}
                            {r === 1 && c === "C" && <Selection $rows={8} />}
                            {r === 9 && c === "C" && (
                                <Pointer width="20" height="26">
                                    <path d="M2 1.500v18.500l4.300-4 3.300 7 3-1.500-3.300-6.500h6z" fill="#2b2b2b" stroke="#fff" strokeWidth="1.300" />
                                </Pointer>
                            )}
                        </Cell>
                    ))}
                    <Cell />
                </tr>
            ))}
        </tbody>
    </Table>
);

const App = () => {
    return (
        <Desktop>
            <Global />
            <TopBar>
                <TopGroup $gap={39} $large>
                    <span>Activities</span>
                    <AppName>
                        <svg width="14" height="15">
                            <path d="M2 0h8l3 3v12H2a1 1 0 0 1-1-1V1a1 1 0 0 1 1-1z" fill="#e6e6e6" />
                            <path d="M3.500 5.500h7v6h-7zM3 7.500h8M3 9.500h8M6 5v7" fill="none" stroke="#222" />
                        </svg>
                        LibreOffice Calc
                    </AppName>
                </TopGroup>
                <TopGroup $gap={18} $left={102}>
                    <span>Apr 22  01:20</span>
                    <svg width="14" height="17" fill="none" stroke="#eee">
                        <path d="M1 13.500h12M3 13c1-2 1-3 1-6 0-4 6-4 6 0 0 3 0 4 1 6M.5 6c0-3 2-5 3.500-5.500M13.500 6c0-3-2-5-3.500-5.500" />
                        <path d="M5.500 15h3" strokeWidth="2" />
                    </svg>
                </TopGroup>
                <TopGroup $gap={13} $end>
                    <svg width="15" height="14">
                        <path d="M0 4.500h3L7 1v12L3 9.500H0z" fill="#f2f2f2" />
                        <path d="M9 4.500c1.500 1.500 1.500 3.500 0 5M11.500 2.500c3 3 3 6 0 9" fill="none" stroke="#ddd" />
                    </svg>
                    <svg width="14" height="14" fill="none" stroke="#f2f2f2" strokeWidth="1.300">
                        <path d="M7 0v7M4 2a6 6 0 1 0 6 0" />
                    </svg>
                </TopGroup>
            </TopBar>
            <Below>
                <DockBar />
                <Win>
                    <TitleBar>
                        <Title>MaturityDate.xlsx - LibreOffice Calc</Title>
                        <WinButtons>
                            <RoundButton aria-label="Minimize">
                                <svg width="8" height="8"><path d="M0 6.500h8" stroke="#333" /></svg>
                            </RoundButton>
                            <RoundButton aria-label="Restore">
                                <svg width="8" height="8" fill="none" stroke="#333">
                                    <path d="M.5 2.500h5v5h-5z" />
                                    <path d="M2.500.5h5v5" stroke="#888" />
                                </svg>
                            </RoundButton>
                            <RoundButton aria-label="Close"><Cross size={8} /></RoundButton>
                        </WinButtons>
                    </TitleBar>
                    <MenuBar>
                        <MenuList>
                            {menus.map((m) => <MenuButton key={m}>{m}</MenuButton>)}
                        </MenuList>
                        <MenuClose aria-label="Close Document"><Cross size={8} /></MenuClose>
                    </MenuBar>
                    <Toolbar aria-label="Standard">
                        <Tools items={standard} />
                    </Toolbar>
                    <Toolbar aria-label="Formatting">
                        <Combo $width={221} $after={8}>
                            <ComboInput aria-label="Font Name" defaultValue="等线" $italic />
                            <ComboButton aria-label="Font list"><Chevron /></ComboButton>
                        </Combo>
                        <Combo $width={101} $after={0}>
                            <ComboInput aria-label="Font Size" defaultValue="11 pt" />
                            <ComboButton aria-label="Size list"><Chevron /></ComboButton>
                        </Combo>
                        <Tools items={formatting} />
                    </Toolbar>
                    <Content>
                        <Sheet>
                            <FormulaBar>
                                <Combo $width={173} $after={0}>
                                    <ComboInput aria-label="Name Box" defaultValue="C2:C9" />
                                    <ComboButton aria-label="Manage Names"><Chevron /></ComboButton>
                                </Combo>
                                <Separator $height={25} $middle />
                                <FormulaButton aria-label="Function Wizard" $width={26}>
                                    <svg width="24" height="24">
                                        {glyph("f", 10, 18, 18)}
                                        {glyph("x", 16, 18, 9, { fontWeight: 400 })}
                                    </svg>
                                </FormulaButton>
                                <FormulaButton aria-label="Select Function" $width={37}>
                                    <svg width="37" height="24">
                                        {glyph("Σ", 10, 18, 18)}
                                        <path d="M25 11h7l-3.500 4z" fill="#000" />
                                    </svg>
                                </FormulaButton>
                                <FormulaButton aria-label="Formula" $width={23}>
                                    <svg width="14" height="12"><path d="M1 2h12M1 8h12" stroke="#222" strokeWidth="2" /></svg>
                                </FormulaButton>
                                <FormulaInput aria-label="Input line" defaultValue="=A2+B2" />
                                <FormulaButton aria-label="Expand Formula Bar" $width={18}><Chevron /></FormulaButton>
                            </FormulaBar>
                            {infos.map(([text, action]) => (
                                <InfoBar key={action}>
                                    <InfoIcon />
                                    <InfoText>{text}</InfoText>
                                    <InfoButton>{action}</InfoButton>
                                    <button aria-label="Close Infobar"><Cross size={16} color="#0b4f8a" weight={2} /></button>
                                </InfoBar>
                            ))}
                            <GridRow>
                                <GridPane><Spreadsheet /></GridPane>
                                <VScroll><VSplit /><VThumb /></VScroll>
                            </GridRow>
                            <HScroll><HThumb /><HSplit /></HScroll>
                            <Tabs>
                                <TabNav aria-label="First Sheet">
                                    <svg width="16" height="14" fill="#f59b7c"><path d="M0 0h2v14H0zM3 7l5-4v3h8v2H8v3z" /></svg>
                                </TabNav>
                                <TabNav aria-label="Previous Sheet">
                                    <svg width="16" height="10" fill="#9b9b9b"><path d="M0 0h1.500v10H0zM8.500 0v10l-7-5zM15.500 0v10l-7-5z" /></svg>
                                </TabNav>
                                <TabNav aria-label="Next Sheet">
                                    <svg width="16" height="10" fill="#9b9b9b"><path d="M14 0h1.500v10H14zM0 0v10l7-5zM7 0v10l7-5z" /></svg>
                                </TabNav>
                                <TabNav aria-label="Last Sheet">
                                    <svg width="16" height="14" fill="#f59b7c"><path d="M14 0h2v14h-2zM13 7L8 3v3H0v2h8v3z" /></svg>
                                </TabNav>
                                <TabAdd aria-label="Add Sheet">
                                    <svg width="16" height="18">
                                        <path d="M2.500 1.500h7l4 4v11h-11a1 1 0 0 1-1-1v-13a1 1 0 0 1 1-1z" fill="#fff" stroke="#555" />
                                        <path d="M9.500 1.500v4h4" fill="none" stroke="#555" />
                                        {badge(11.5, 13.5, "#159026", "+")}
                                    </svg>
                                </TabAdd>
                                <Tab>Sheet1</Tab>
                            </Tabs>
                        </Sheet>
                        <Sidebar>
                            <SideButton aria-label="Sidebar Menu">
                                <svg width="10" height="10"><path d="M0 .5h10M0 4.500h10M0 8.500h10" stroke="#333" /></svg>
                            </SideButton>
                            <SideButton aria-label="Properties" $on>
                                <svg width="16" height="17">
                                    <rect y="0" width="16" height="7" rx="3.500" fill={O} />
                                    <rect y="9" width="16" height="7" rx="3.500" fill={O} />
                                    <circle cx="12.500" cy="3.500" r="2.500" fill="#fff" />
                                    <circle cx="3.500" cy="12.500" r="2.500" fill="#fff" />
                                </svg>
                            </SideButton>
                            <SideButton aria-label="Styles">
                                <svg width="24" height="24">
                                    {glyph("A", 16, 13, 15)}
                                    <path d="M4 12l4-5 4 2 4 6-4 3-5-5z" fill="#fff" stroke={K} />
                                    <path d="M2 21l5-5" stroke="#f4907f" strokeWidth="3" />
                                </svg>
                            </SideButton>
                            <SideButton aria-label="Gallery">
                                <svg width="20" height="18" stroke="#4a4a4a">
                                    <rect x=".5" y=".5" width="16" height="13" rx="1.500" fill="#db5fcb" />
                                    <rect x="3.500" y="4.500" width="16" height="13" rx="1.500" fill="#db5fcb" />
                                    <path d="M7 15l3-5 2 2.500 1.500-1.500 2.500 4z" fill="#fff" stroke="none" />
                                    <circle cx="15.500" cy="8.500" r="1" fill="#fff" stroke="none" />
                                </svg>
                            </SideButton>
                            <SideButton aria-label="Navigator">
                                <svg width="20" height="20">
                                    <circle cx="10" cy="10" r="9.500" fill="#4a7bea" stroke="#4a4a4a" />
                                    <path d="M14.500 5.500l-6 3 3 3z" fill="#e8364f" />
                                    <path d="M5.500 14.500l1.500-5 3-2 2.500 2.500-2 3z" fill="#eee" />
                                </svg>
                            </SideButton>
                            <SideButton aria-label="Functions">
                                <svg width="20" height="20">
                                    {glyph("f", 6, 17, 21, { fontWeight: 400, stroke: "#2b2b2b", strokeWidth: 0.6 })}
                                    {glyph("x", 15, 18, 13)}
                                </svg>
                            </SideButton>
                            <SideHandle>
                                <svg width="7" height="8"><path d="M1 0l5 4-5 4z" fill="#fff" /></svg>
                            </SideHandle>
                        </Sidebar>
                    </Content>
                    <StatusBar>
                        <StatusItem>Sheet 1 of 1</StatusItem>
                        <StatusItem>Selected: 8 rows, 1 column</StatusItem>
                        <StatusItem>PageStyle_Sheet1</StatusItem>
                        <StatusItem $center $wide>English (Hong Kong)</StatusItem>
                        <StatusItem />
                        <StatusItem $center>
                            <svg width="18" height="12" fill="none">
                                <path d="M1 3.500h8v6H1z" stroke={O} strokeWidth="1.300" />
                                <path d="M12 1.500h5m-5 9h5m-2.500-9v9" stroke="#222" strokeWidth="1.300" />
                            </svg>
                        </StatusItem>
                        <StatusItem $center>
                            <svg width="12" height="12">
                                <path d="M3.500 1h3v4h2.500L5 9.500 1 5h2.500z" fill="#8cc63f" stroke="#4d5f2a" />
                                <path d="M1 11.500h8" stroke="#333" />
                                <circle cx="10.500" cy="2" r="1.500" fill="#c8102e" />
                            </svg>
                        </StatusItem>
                        <StatusItem />
                        <StatusItem $center>Average: 03/03/11; Sum: 21/05/89</StatusItem>
                        <Zoom>
                            <svg width="8" height="8"><path d="M0 4h8" stroke="#555" strokeWidth="2" /></svg>
                            <ZoomSlider type="range" aria-label="Zoom" min="0" max="100" defaultValue="50" />
                            <svg width="8" height="8"><path d="M0 4h8M4 0v8" stroke="#555" strokeWidth="2" /></svg>
                        </Zoom>
                        <StatusItem>100%</StatusItem>
                    </StatusBar>
                </Win>
            </Below>
        </Desktop>
    );
};

export default App;
